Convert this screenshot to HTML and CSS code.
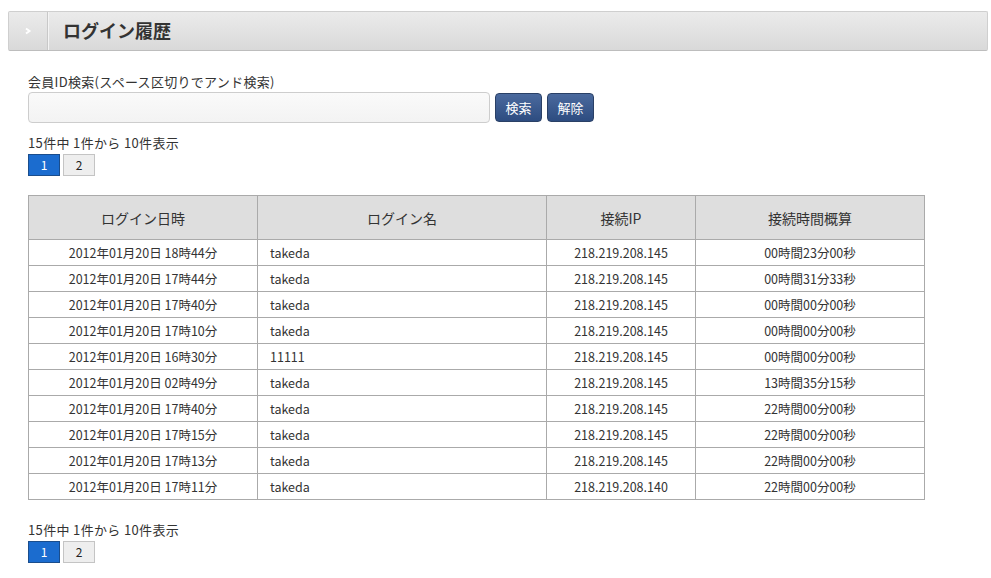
FILE: index.html
```html
<!DOCTYPE html>
<html lang="ja">
<head>
<meta charset="utf-8">
<title>ログイン履歴</title>
<link rel="stylesheet" href="styles.css">
</head>
<body>
<div class="page">
  <div class="titlebar">
    <div class="tb-icon">
      <svg width="8" height="8" viewBox="0 0 8 8"><path d="M2 1.5 L5.5 4 L2 6.5" fill="none" stroke="#fff" stroke-width="2"/></svg>
    </div>
    <h1 class="tb-title">ログイン履歴</h1>
  </div>

  <div class="content">
    <div class="search">
      <label class="search-label">会員ID検索(スペース区切りでアンド検索)</label>
      <div class="search-row">
        <input class="search-input" type="text">
        <button class="btn">検索</button>
        <button class="btn">解除</button>
      </div>
    </div>

    <div class="pager-block">
      <div class="count">15件中 1件から 10件表示</div>
      <div class="pager">
        <span class="pg active">1</span>
        <span class="pg">2</span>
      </div>
    </div>

    <table class="log">
      <colgroup>
        <col class="c1"><col class="c2"><col class="c3"><col class="c4">
      </colgroup>
      <thead>
        <tr><th>ログイン日時</th><th>ログイン名</th><th>接続IP</th><th>接続時間概算</th></tr>
      </thead>
      <tbody>
        <tr><td class="ctr">2012年01月20日 18時44分</td><td>takeda</td><td class="ctr">218.219.208.145</td><td class="ctr">00時間23分00秒</td></tr>
        <tr><td class="ctr">2012年01月20日 17時44分</td><td>takeda</td><td class="ctr">218.219.208.145</td><td class="ctr">00時間31分33秒</td></tr>
        <tr><td class="ctr">2012年01月20日 17時40分</td><td>takeda</td><td class="ctr">218.219.208.145</td><td class="ctr">00時間00分00秒</td></tr>
        <tr><td class="ctr">2012年01月20日 17時10分</td><td>takeda</td><td class="ctr">218.219.208.145</td><td class="ctr">00時間00分00秒</td></tr>
        <tr><td class="ctr">2012年01月20日 16時30分</td><td>11111</td><td class="ctr">218.219.208.145</td><td class="ctr">00時間00分00秒</td></tr>
        <tr><td class="ctr">2012年01月20日 02時49分</td><td>takeda</td><td class="ctr">218.219.208.145</td><td class="ctr">13時間35分15秒</td></tr>
        <tr><td class="ctr">2012年01月20日 17時40分</td><td>takeda</td><td class="ctr">218.219.208.145</td><td class="ctr">22時間00分00秒</td></tr>
        <tr><td class="ctr">2012年01月20日 17時15分</td><td>takeda</td><td class="ctr">218.219.208.145</td><td class="ctr">22時間00分00秒</td></tr>
        <tr><td class="ctr">2012年01月20日 17時13分</td><td>takeda</td><td class="ctr">218.219.208.145</td><td class="ctr">22時間00分00秒</td></tr>
        <tr><td class="ctr">2012年01月20日 17時11分</td><td>takeda</td><td class="ctr">218.219.208.140</td><td class="ctr">22時間00分00秒</td></tr>
      </tbody>
    </table>

    <div class="pager-block bottom">
      <div class="count">15件中 1件から 10件表示</div>
      <div class="pager">
        <span class="pg active">1</span>
        <span class="pg">2</span>
      </div>
    </div>
  </div>
</div>
</body>
</html>
```

FILE: styles.css
```css
html, body {
  margin: 0;
  padding: 0;
  background: #fff;
}
body {
  font-family: "Noto Sans CJK JP", "Noto Sans", sans-serif;
  color: #333;
  font-size: 13px;
}
.page {
  padding: 11px 3px 0 8px;
}
.titlebar {
  display: flex;
  align-items: stretch;
  height: 40px;
  box-sizing: border-box;
  border: 1px solid #cfcfcf;
  border-bottom-color: #bdbdbd;
  border-radius: 2px;
  background: linear-gradient(#ebebeb, #d9d9d9);
}
.tb-icon {
  width: 38px;
  display: flex;
  align-items: center;
  justify-content: center;
  border-right: 1px solid #c8c8c8;
  box-shadow: 1px 0 0 #f4f4f4;
}
.tb-title {
  margin: 0;
  padding-left: 15px;
  font-size: 18px;
  font-weight: bold;
  color: #333;
  line-height: 36px;
}
.content {
  padding: 21px 0 0 20px;
}
.search-label {
  display: block;
  font-size: 13px;
  line-height: 20px;
  letter-spacing: 0.3px;
  color: #333;
}
.search-row {
  display: flex;
  align-items: center;
  gap: 5px;
}
.search-input {
  width: 462px;
  height: 31px;
  box-sizing: border-box;
  border: 1px solid #cdcdcd;
  border-radius: 4px;
  background: linear-gradient(#fafafa, #f3f3f3);
  margin: 0;
}
.btn {
  width: 47px;
  height: 29px;
  padding: 0;
  border: 1px solid #2a4066;
  border-radius: 4px;
  background: linear-gradient(#4b6a9e, #2d4c80);
  color: #fff;
  font-family: "Noto Sans CJK JP", sans-serif;
  font-size: 13px;
  margin: 0;
}
.pager-block {
  margin-top: 9px;
}
.count {
  font-size: 13px;
  line-height: 22px;
  letter-spacing: 0.35px;
  color: #333;
}
.pager {
  display: flex;
  gap: 3px;
}
.pg {
  width: 32px;
  height: 22px;
  box-sizing: border-box;
  border: 1px solid #c4c4c4;
  background: #eeeeee;
  color: #222;
  font-size: 12px;
  line-height: 20px;
  text-align: center;
}
.pg.active {
  background: #1b6ccf;
  border-color: #1a4d8c;
  color: #fff;
}
table.log {
  margin-top: 19px;
  border-collapse: collapse;
  width: 897px;
  table-layout: fixed;
  border: 1px solid #aaa;
}
col.c1 { width: 229px; }
col.c2 { width: 289px; }
col.c3 { width: 149px; }
col.c4 { width: 229px; }
table.log th {
  background: #dedede;
  height: 44px;
  box-sizing: border-box;
  font-weight: normal;
  font-size: 14px;
  color: #333;
  border: 1px solid #aaa;
  padding: 0;
}
table.log td {
  height: 26px;
  box-sizing: border-box;
  border: 1px solid #aaa;
  font-size: 12.5px;
  color: #333;
  padding: 0 0 0 12px;
}
table.log td.ctr {
  text-align: center;
  padding: 0;
}
.pager-block.bottom {
  margin-top: 19px;
}
```
